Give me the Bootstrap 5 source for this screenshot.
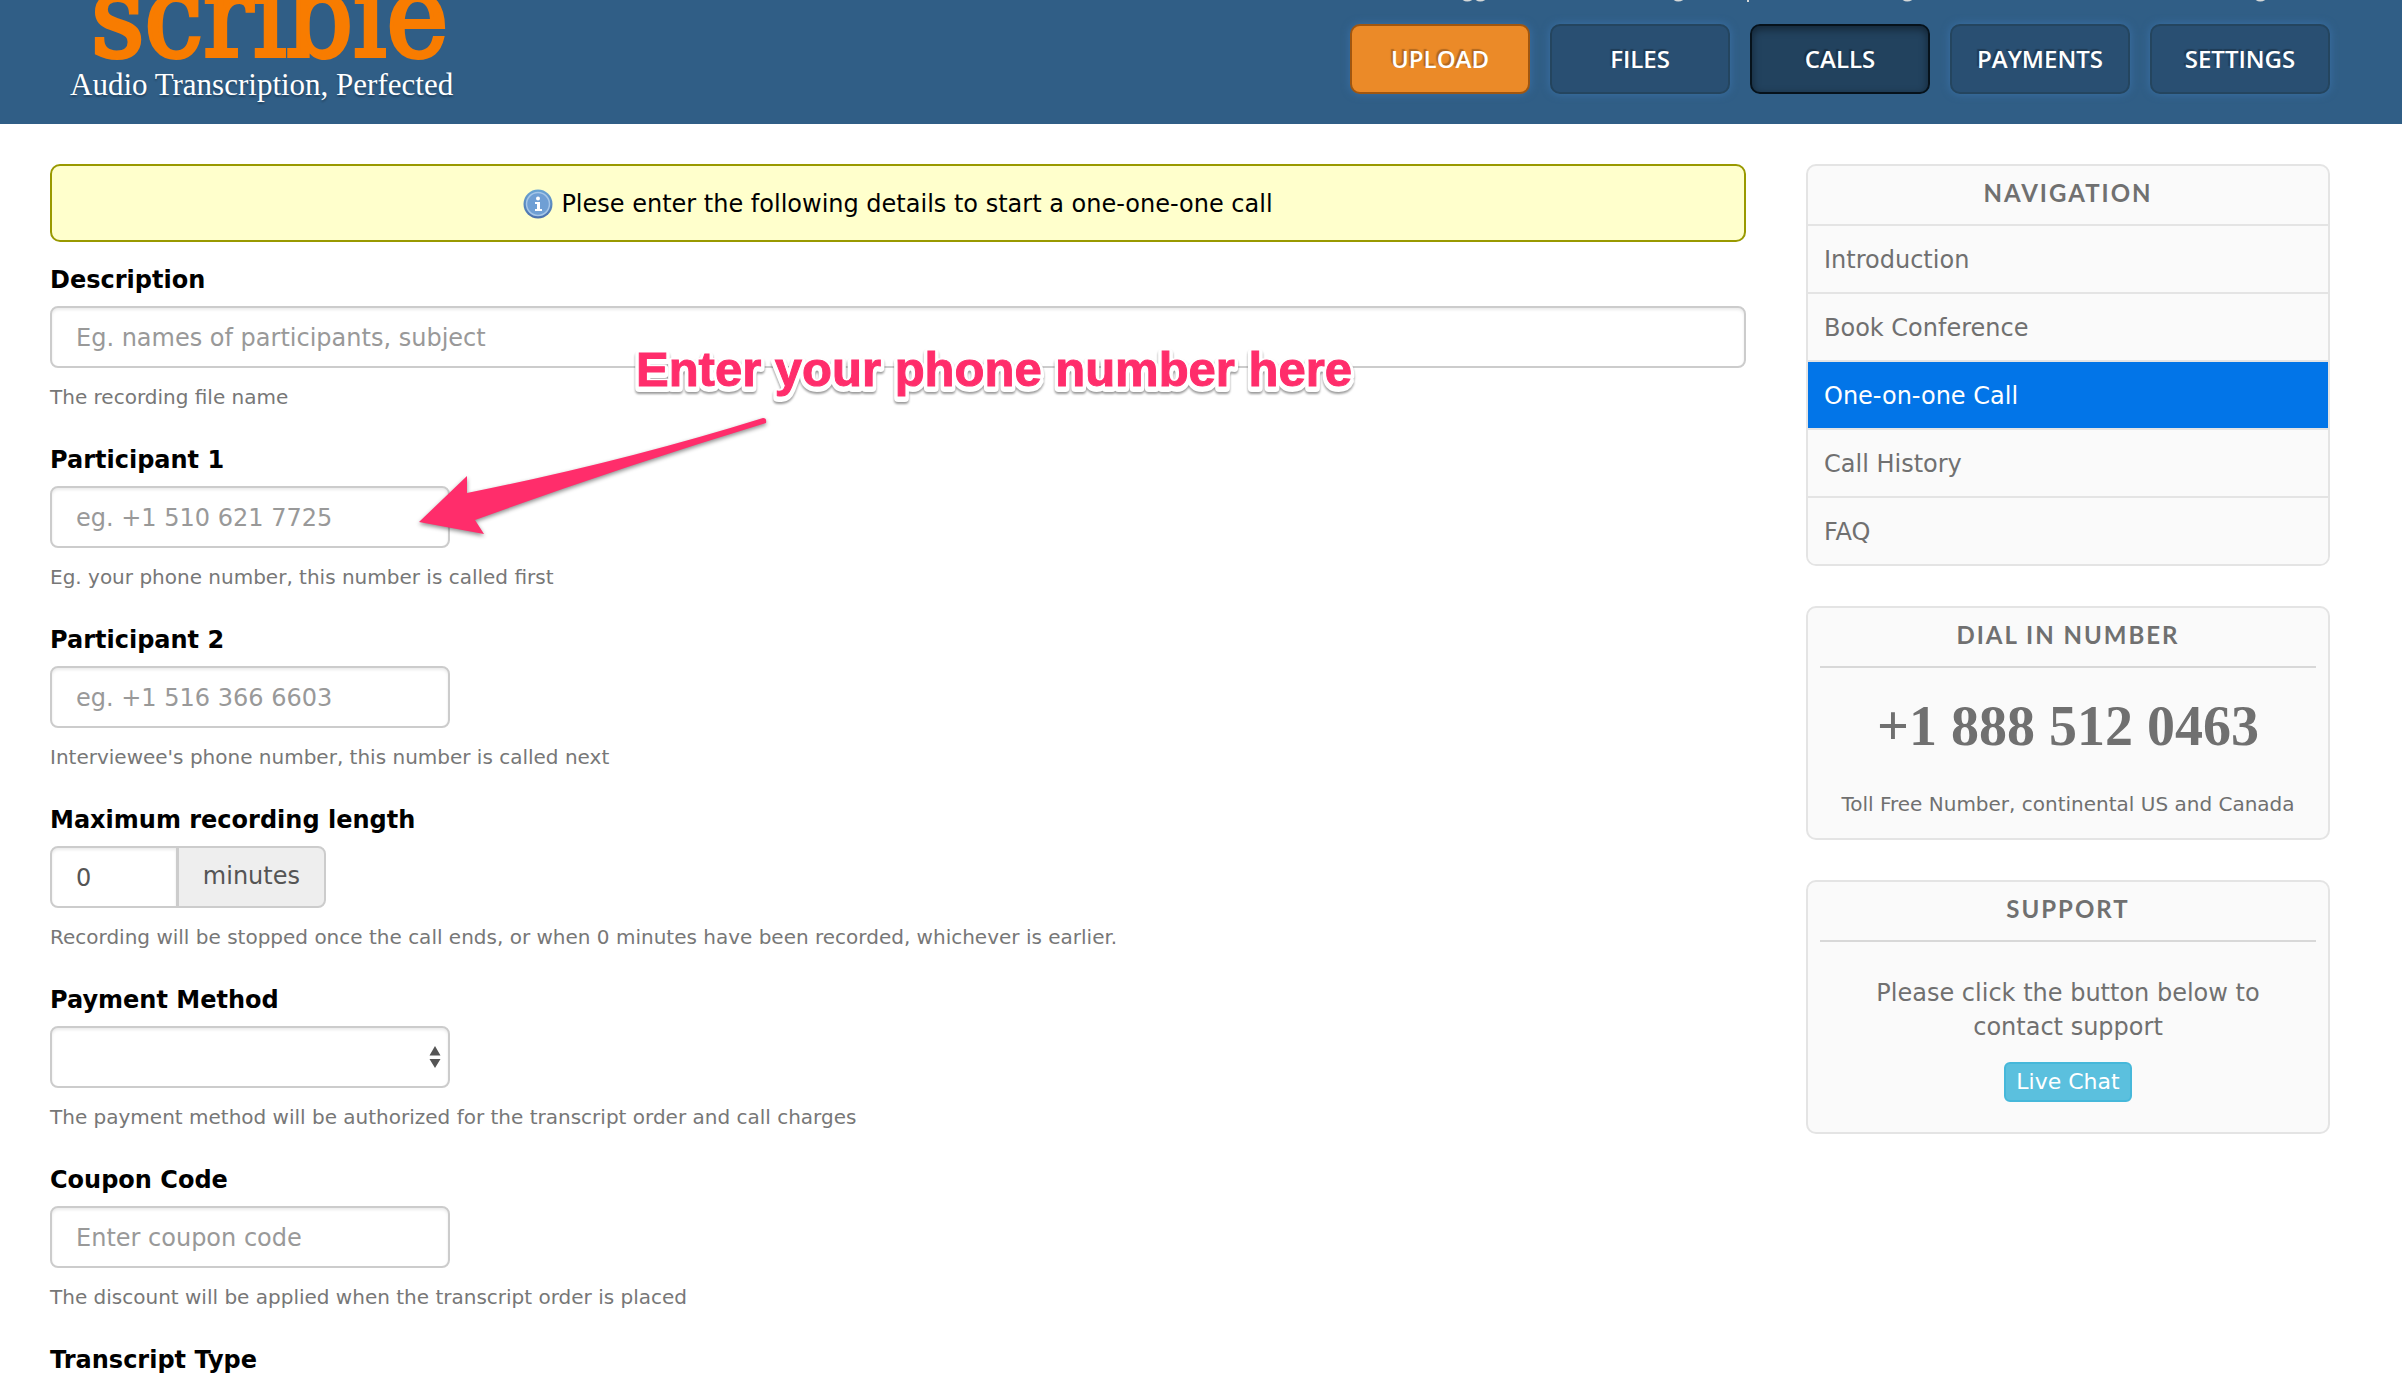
<!DOCTYPE html>
<html lang="en">
<head>
<meta charset="utf-8">
<meta name="viewport" content="width=device-width, initial-scale=1">
<title>Scribie - One-on-one Call</title>
<link rel="stylesheet" href="https://cdn.jsdelivr.net/npm/bootstrap@5.3.0/dist/css/bootstrap.min.css">
<style>
  body { font-family: Verdana, "DejaVu Sans", sans-serif; font-size: 24px; line-height: 34px; color: #000; background: #fff; }

  /* Header */
  .site-header { height: 124px; background: #305e86; overflow: hidden; padding: 0 72px 0 70px; }
  .brand { color: #fff; text-decoration: none; text-align: center; }
  .brand-name { font-family: "DejaVu Serif Condensed", "DejaVu Serif", serif; font-stretch: condensed; font-size: 116px; line-height: 80px; color: #f87c00; -webkit-text-stroke: 4px #f87c00; margin-top: -24px; padding-left: 16px; }
  .brand-tag { font-family: Palatino, "Liberation Serif", serif; font-size: 31px; line-height: 36px; margin-top: 11px; text-shadow: 0 2px 2px rgba(0, 0, 0, .3); }
  .account-strip { height: 4px; width: 1010px; }
  .main-nav { gap: 20px; margin-top: 20px; }
  .nav-btn { width: 180px; height: 70px; padding: 0; border: 2px solid #24455f; border-radius: 10px; background: #294f72; color: #fff; font-family: "Open Sans", sans-serif; font-weight: 600; font-size: 24px; line-height: 66px; text-shadow: -2px -2px 1px rgba(0, 0, 0, .25); box-shadow: 0 0 8px #3a70a6; }
  .nav-btn:hover { color: #fff; background: #24455f; border-color: #24455f; }
  .nav-btn.upload { background: #eb8a28; border-color: #a0560f; }
  .nav-btn.current { background: #22425e; border-color: #06121b; box-shadow: inset 0 3px 8px rgba(0, 0, 0, .45); color: #fff; }

  /* Form */
  .page { padding: 40px 72px 0 50px; gap: 60px; }
  .notice { height: 78px; border: 2px solid #990; border-radius: 10px; background: #ffc; gap: 8px; margin-bottom: 24px; padding: 2px 0 0; color: #000; }
  .field-group { margin-bottom: 35px; }
  .field-label { display: block; font-weight: 700; line-height: 28px; margin-bottom: 12px; }
  .field-help { font-size: 20px; line-height: 28px; margin: 15px 0 0; color: #777; }
  .form-control, .form-select, .input-group-text { height: 62px; border: 2px solid #ccc; border-radius: 8px; font-size: 24px; line-height: 34px; padding: 13px 24px 11px; color: #555; background-color: #fff; }
  .form-control, .form-select { box-shadow: inset 0 2px 3px rgba(0, 0, 0, .08); }
  .form-control::placeholder { color: #999; opacity: 1; }
  .form-control.short, .form-select.short { width: 400px; }
  .form-select.short { background-image: none; }
  .select-arrows { right: 8px; top: 20px; pointer-events: none; }
  .minutes-group { width: 276px; }
  .input-group-text { background: #eee; padding-bottom: 15px; }

  /* Sidebar */
  .sidebar { width: 524px; gap: 40px; color: #707070; }
  .panel { border: 2px solid #e4e4e4; border-radius: 10px; background: #fafafa; overflow: hidden; }
  .panel-title { font-family: "Trebuchet MS", Lato, sans-serif; font-size: 24px; font-weight: 700; line-height: 54px; padding-bottom: 4px; letter-spacing: 2px; text-align: center; text-transform: uppercase; margin: 0; color: #707070; }
  .panel-body { padding: 0 12px; text-align: center; }
  .panel-body .panel-title { border-bottom: 2px solid #d8d8d8; }
  .panel .list-group .list-group-item { border: 0 solid #e4e4e4; border-top-width: 2px; background: #fafafa; color: #707070; padding: 17px 16px 15px; line-height: 34px; border-radius: 0; margin: 0; }
  .panel .list-group .list-group-item.active { background: #0275e8; color: #fff; border-top-width: 2px; margin: 0; }
  .dial-number { font-family: Palatino, "Liberation Serif", serif; font-weight: 700; font-size: 56px; line-height: 64px; margin: 26px 0 32px; }
  .dial-note { font-size: 20px; line-height: 28px; margin: 0 0 20px; }
  .support-text { margin: 34px 40px 18px; }
  .chat-btn { width: 128px; height: 40px; padding: 0; border: 2px solid #46b8da; border-radius: 6px; background: #5bc0de; color: #fff; font-size: 22px; line-height: 36px; margin-bottom: 30px; }

  /* Pink call-out drawn over the form */
  .callout { left: 400px; top: 216px; pointer-events: none; overflow: visible; }
  .callout text { font-family: Helvetica, "Liberation Sans", sans-serif; font-weight: 700; font-size: 49px; fill: #ff2d6b; stroke: #ff2d6b; stroke-width: 1px; }
  .callout .halo { fill: #fff; stroke: #fff; stroke-width: 8px; stroke-linejoin: round; filter: drop-shadow(0 2px 1px rgba(0, 0, 0, .4)); }
  .callout path { fill: #ff2d6b; filter: drop-shadow(0 2px 2px rgba(0, 0, 0, .45)); }
</style>
</head>
<body>
<header class="site-header d-flex justify-content-between">
  <a class="brand d-block" href="#">
    <div class="brand-name">scribie</div>
    <div class="brand-tag">Audio Transcription, Perfected</div>
  </a>
  <div class="d-flex flex-column align-items-end">
    <svg class="account-strip" viewBox="0 0 1010 4" aria-hidden="true">
      <g fill="none" stroke="#d5d8d8" stroke-width="2">
        <path d="M143-1q4 3 9 0M156-1q4 3 9 0M354-1q4 3 9 0M583-1q4 3 9 0M936-1q4 3 9 0M428 0v2"/>
      </g>
    </svg>
    <nav class="main-nav d-flex" aria-label="Main">
      <a class="btn nav-btn upload" href="#">UPLOAD</a>
      <a class="btn nav-btn" href="#">FILES</a>
      <a class="btn nav-btn current" href="#" aria-current="page">CALLS</a>
      <a class="btn nav-btn" href="#">PAYMENTS</a>
      <a class="btn nav-btn" href="#">SETTINGS</a>
    </nav>
  </div>
</header>

<div class="page d-flex align-items-start position-relative">
  <main class="flex-grow-1">
    <div class="notice d-flex align-items-center justify-content-center" role="status">
      <svg width="30" height="30" viewBox="0 0 30 30" aria-hidden="true">
        <defs><linearGradient id="info" x1="0" y1="0" x2="0" y2="1"><stop offset="0" stop-color="#6aa5d4"/><stop offset="1" stop-color="#4a70ad"/></linearGradient></defs>
        <circle cx="15" cy="15" r="14.5" fill="url(#info)"/>
        <circle cx="15" cy="15" r="11.5" fill="#6f9fd4" stroke="#a5c6e8" stroke-width="1.5"/>
        <circle cx="15" cy="9.5" r="2" fill="#fff"/>
        <path d="M12 13h5v7h2v2h-7v-2h2v-5h-2z" fill="#fff"/>
      </svg>
      <span>Plese enter the following details to start a one-one-one call</span>
    </div>
    <form>
      <div class="field-group">
        <label class="field-label" for="description">Description</label>
        <input class="form-control" id="description" type="text" placeholder="Eg. names of participants, subject">
        <p class="field-help">The recording file name</p>
      </div>
      <div class="field-group">
        <label class="field-label" for="participant1">Participant 1</label>
        <input class="form-control short" id="participant1" type="tel" placeholder="eg. +1 510 621 7725">
        <p class="field-help">Eg. your phone number, this number is called first</p>
      </div>
      <div class="field-group">
        <label class="field-label" for="participant2">Participant 2</label>
        <input class="form-control short" id="participant2" type="tel" placeholder="eg. +1 516 366 6603">
        <p class="field-help">Interviewee's phone number, this number is called next</p>
      </div>
      <div class="field-group">
        <label class="field-label" for="maxlength">Maximum recording length</label>
        <div class="input-group minutes-group flex-nowrap">
          <input class="form-control" id="maxlength" type="text" value="0">
          <span class="input-group-text">minutes</span>
        </div>
        <p class="field-help">Recording will be stopped once the call ends, or when 0 minutes have been recorded, whichever is earlier.</p>
      </div>
      <div class="field-group">
        <label class="field-label" for="payment">Payment Method</label>
        <div class="position-relative d-inline-block align-top">
          <select class="form-select short" id="payment"><option value=""></option></select>
          <svg class="select-arrows position-absolute" width="14" height="22" viewBox="0 0 14 22" aria-hidden="true"><path d="M1.500 9.500 7 0l5.500 9.500zM1.500 13h11L7 22z" fill="#555"/></svg>
        </div>
        <p class="field-help">The payment method will be authorized for the transcript order and call charges</p>
      </div>
      <div class="field-group">
        <label class="field-label" for="coupon">Coupon Code</label>
        <input class="form-control short" id="coupon" type="text" placeholder="Enter coupon code">
        <p class="field-help">The discount will be applied when the transcript order is placed</p>
      </div>
      <div class="field-label mb-0">Transcript Type</div>
    </form>
  </main>

  <aside class="sidebar d-flex flex-column flex-shrink-0">
    <nav class="panel" aria-label="Calls">
      <h2 class="panel-title">Navigation</h2>
      <div class="list-group list-group-flush">
        <a class="list-group-item" href="#">Introduction</a>
        <a class="list-group-item" href="#">Book Conference</a>
        <a class="list-group-item active" href="#" aria-current="page">One-on-one Call</a>
        <a class="list-group-item" href="#">Call History</a>
        <a class="list-group-item" href="#">FAQ</a>
      </div>
    </nav>
    <section class="panel panel-body">
      <h2 class="panel-title">Dial in number</h2>
      <p class="dial-number">+1 888 512 0463</p>
      <p class="dial-note">Toll Free Number, continental US and Canada</p>
    </section>
    <section class="panel panel-body">
      <h2 class="panel-title">Support</h2>
      <p class="support-text">Please click the button below to contact support</p>
      <button class="btn chat-btn" type="button">Live Chat</button>
    </section>
  </aside>

  <svg class="callout position-absolute" width="980" height="220" viewBox="0 0 980 220">
    <text class="halo" x="236" y="48" aria-hidden="true">Enter your phone number here</text>
    <text x="236" y="46">Enter your phone number here</text>
    <path d="M19 182 67 136V153Q222 122 363 78Q367 78 366 83Q215 129 75 180L84 194Z"/>
  </svg>
</div>
<script src="https://cdn.jsdelivr.net/npm/bootstrap@5.3.0/dist/js/bootstrap.bundle.min.js"></script>
</body>
</html>
